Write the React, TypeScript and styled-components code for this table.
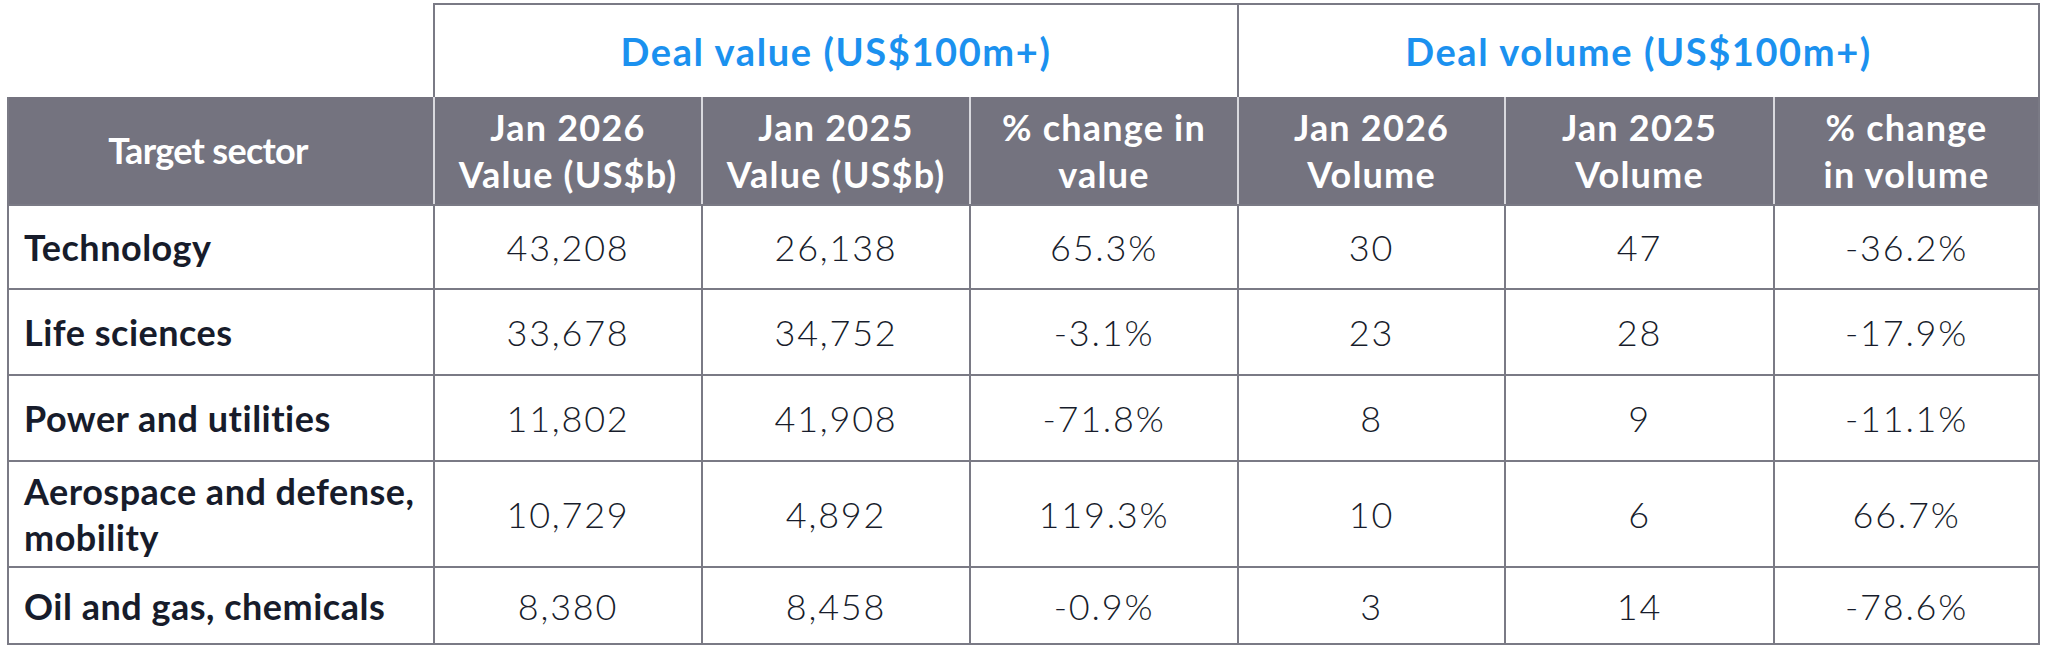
import React from 'react'
import styled, { createGlobalStyle } from 'styled-components'

const GlobalStyle = createGlobalStyle`
  html, body {
    margin: 0;
    padding: 0;
    background: #ffffff;
  }
  body {
    font-family: Lato, "Liberation Sans", sans-serif;
  }
`

const LINE = '#7a7a85'
const HEAD_BG = '#74737f'
const INK = '#171c2b'
const BLUE = '#1b91ef'

const Page = styled.div`
  padding: 3px 0 0 7px;
  width: 2048px;
  height: 649px;
  box-sizing: border-box;
  overflow: hidden;
`

const Table = styled.table`
  border-collapse: collapse;
  table-layout: fixed;
  width: 2031px;
`

const HeadRow = styled.tr<{ $h: number }>`
  height: ${(p) => p.$h}px;
`

const BlankCell = styled.th`
  border: none;
  padding: 0;
`

const GroupCell = styled.th`
  border-top: 2px solid ${LINE};
  border-left: 2px solid ${LINE};
  border-right: 2px solid ${LINE};
  border-bottom: none;
  color: ${BLUE};
  font-size: 38px;
  font-weight: 700;
  text-align: center;
  vertical-align: middle;
  padding: 0;
  letter-spacing: 1.6px;
`

const HeadCell = styled.th<{ $sector?: boolean }>`
  background: ${HEAD_BG};
  color: #ffffff;
  font-size: 36px;
  font-weight: 700;
  line-height: 47px;
  text-align: center;
  vertical-align: middle;
  padding: ${(p) => (p.$sector ? '0 26px 0 0' : '0 4px')};
  border-top: none;
  border-left: 2px solid #d9d9de;
  border-right: 2px solid #d9d9de;
  border-bottom: 2px solid ${LINE};
  letter-spacing: ${(p) => (p.$sector ? '-0.7px' : '1.2px')};
  &:first-child {
    border-left: 2px solid ${LINE};
  }
  &:last-child {
    border-right: 2px solid ${LINE};
  }
`

const DataRow = styled.tr<{ $h: number }>`
  height: ${(p) => p.$h}px;
`

const SectorCell = styled.td`
  border: 2px solid ${LINE};
  color: ${INK};
  font-size: 36px;
  font-weight: 700;
  line-height: 46px;
  text-align: left;
  vertical-align: middle;
  padding: 0 8px 0 15px;
  letter-spacing: 0.5px;
`

const NumCell = styled.td`
  border: 2px solid ${LINE};
  color: ${INK};
  font-size: 36px;
  font-weight: 300;
  text-align: center;
  vertical-align: middle;
  padding: 0;
  letter-spacing: 1.8px;
`

type Row = {
  sector: string
  h: number
  values: string[]
}

const rows: Row[] = [
  { sector: 'Technology', h: 84, values: ['43,208', '26,138', '65.3%', '30', '47', '-36.2%'] },
  { sector: 'Life sciences', h: 86, values: ['33,678', '34,752', '-3.1%', '23', '28', '-17.9%'] },
  { sector: 'Power and utilities', h: 86, values: ['11,802', '41,908', '-71.8%', '8', '9', '-11.1%'] },
  {
    sector: 'Aerospace and defense, mobility',
    h: 106,
    values: ['10,729', '4,892', '119.3%', '10', '6', '66.7%'],
  },
  { sector: 'Oil and gas, chemicals', h: 77, values: ['8,380', '8,458', '-0.9%', '3', '14', '-78.6%'] },
]

const colWidths = [426, 268, 268, 268, 267, 269, 265]

const headers: [string, string][] = [
  ['Jan 2026', 'Value (US$b)'],
  ['Jan 2025', 'Value (US$b)'],
  ['% change in', 'value'],
  ['Jan 2026', 'Volume'],
  ['Jan 2025', 'Volume'],
  ['% change', 'in volume'],
]

const App: React.FC = () => {
  return (
    <>
      <GlobalStyle />
      <Page>
        <Table>
          <colgroup>
            {colWidths.map((w, i) => (
              <col key={i} style={{ width: w }} />
            ))}
          </colgroup>
          <thead>
            <HeadRow $h={93}>
              <BlankCell />
              <GroupCell colSpan={3}>Deal value (US$100m+)</GroupCell>
              <GroupCell colSpan={3}>Deal volume (US$100m+)</GroupCell>
            </HeadRow>
            <HeadRow $h={108}>
              <HeadCell $sector>Target sector</HeadCell>
              {headers.map(([a, b], i) => (
                <HeadCell key={i}>
                  {a}
                  <br />
                  {b}
                </HeadCell>
              ))}
            </HeadRow>
          </thead>
          <tbody>
            {rows.map((r) => (
              <DataRow key={r.sector} $h={r.h}>
                <SectorCell>{r.sector}</SectorCell>
                {r.values.map((v, i) => (
                  <NumCell key={i}>{v}</NumCell>
                ))}
              </DataRow>
            ))}
          </tbody>
        </Table>
      </Page>
    </>
  )
}

export default App
